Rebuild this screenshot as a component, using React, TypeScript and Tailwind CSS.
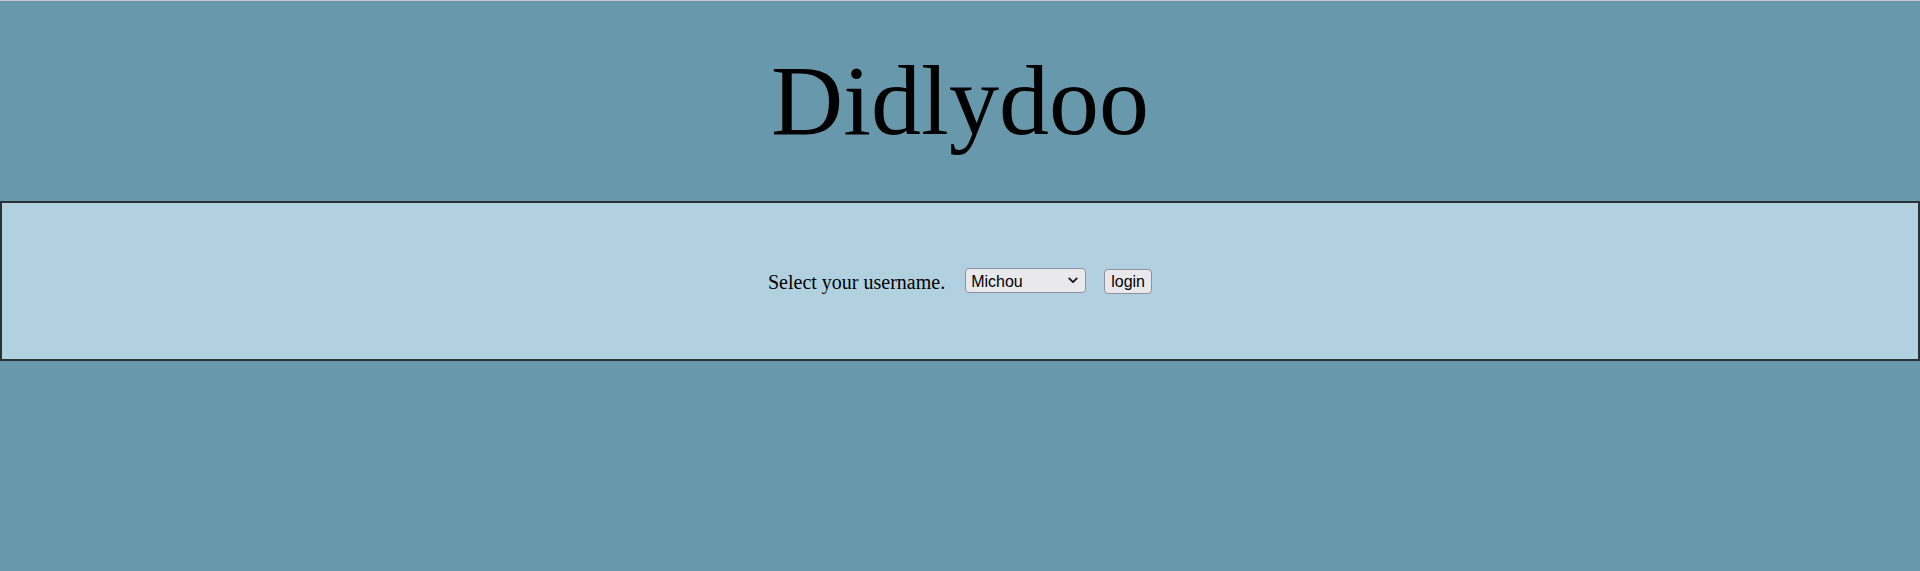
import { useState } from 'react'

const users = ['Michou', 'Bernard', 'Ginette', 'Jean-Paul']

export default function App() {
  const [user, setUser] = useState(users[0])

  return (
    <div className="min-h-screen border-t border-[#c8cacb] bg-[#6898ab] font-['Liberation_Serif',serif] text-black">
      <header className="flex h-[200px] items-center justify-center">
        <h1 className="text-[100px] leading-none font-normal">Didlydoo</h1>
      </header>

      <main className="flex h-[160px] items-center justify-center border-2 border-[#2a3234] bg-[#b1d0e0]">
        <label htmlFor="username" className="mt-[2px] mr-[20px] text-[20px]">
          Select your username.
        </label>
        <div className="relative mr-[18px]">
          <select
            id="username"
            value={user}
            onChange={e => setUser(e.target.value)}
            className="h-[25px] w-[121px] appearance-none rounded-[4px] border border-[#8f8f9d] bg-[#e9e9ed] pt-[2px] pl-[5px] pr-6 font-['Liberation_Sans',Arial,sans-serif] text-[16px] leading-none"
          >
            {users.map(u => (
              <option key={u} value={u}>
                {u}
              </option>
            ))}
          </select>
          <svg
            className="pointer-events-none absolute top-[9px] right-[8px]"
            width="10"
            height="7"
            viewBox="0 0 10 7"
            fill="none"
          >
            <path d="M1.2 1.4 5 5.2 8.8 1.4" stroke="#111" strokeWidth="1.7" strokeLinecap="round" strokeLinejoin="round" />
          </svg>
        </div>
        <button
          type="button"
          className="h-[25px] rounded-[4px] border border-[#8f8f9d] bg-[#e9e9ed] px-[6px] pt-[2px] font-['Liberation_Sans',Arial,sans-serif] text-[16px] leading-none hover:bg-[#d0d0d7]"
        >
          login
        </button>
      </main>
    </div>
  )
}
